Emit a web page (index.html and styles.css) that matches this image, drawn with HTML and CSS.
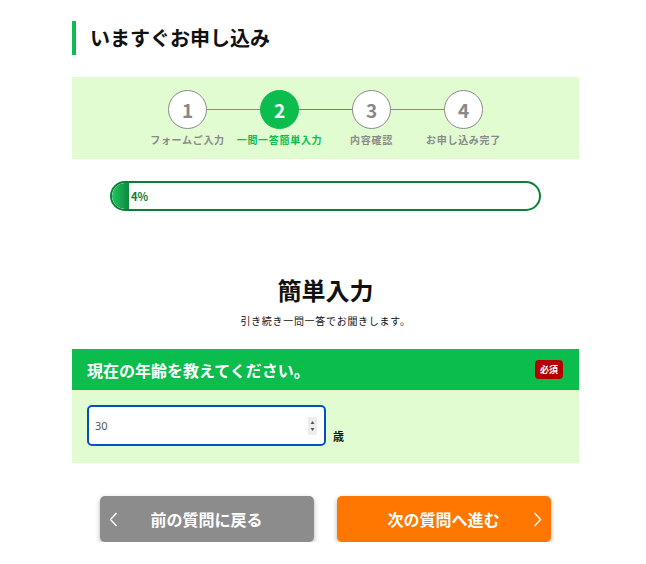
FILE: index.html
```html
<!DOCTYPE html>
<html lang="ja">
<head>
<meta charset="utf-8">
<title>いますぐお申し込み</title>
<link rel="stylesheet" href="styles.css">
</head>
<body>
<div class="page">
  <h1 class="page-title">いますぐお申し込み</h1>

  <div class="steps">
    <div class="step done">
      <div class="circle">1</div>
      <div class="step-label">フォームご入力</div>
    </div>
    <div class="step active">
      <div class="circle">2</div>
      <div class="step-label">一問一答簡単入力</div>
    </div>
    <div class="step">
      <div class="circle">3</div>
      <div class="step-label">内容確認</div>
    </div>
    <div class="step last">
      <div class="circle">4</div>
      <div class="step-label">お申し込み完了</div>
    </div>
  </div>

  <div class="progress">
    <div class="progress-fill" style="width:4%"></div>
    <span class="progress-text">4%</span>
  </div>

  <h2 class="section-title">簡単入力</h2>
  <p class="section-sub">引き続き一問一答でお聞きします。</p>

  <div class="question">
    <div class="question-head">
      <span class="question-text">現在の年齢を教えてください。</span>
      <span class="badge">必須</span>
    </div>
    <div class="question-body">
      <label class="num-field">
        <input class="num-input" type="text" value="30">
        <span class="spinner">
          <svg width="9" height="18" viewBox="0 0 9 18"><polygon points="4.5,4 6.5,7 2.5,7" fill="#555"/><polygon points="2.5,11 6.5,11 4.5,14" fill="#555"/></svg>
        </span>
      </label>
      <span class="unit">歳</span>
    </div>
  </div>

  <div class="buttons">
    <button class="btn btn-back">
      <svg class="chev" width="9" height="15" viewBox="0 0 9 15"><polyline points="7.5,1 1.5,7.5 7.5,14" fill="none" stroke="#fff" stroke-width="1.4"/></svg>
      <span class="btn-text">前の質問に戻る</span>
      <span class="chev-space"></span>
    </button>
    <button class="btn btn-next">
      <span class="chev-space"></span>
      <span class="btn-text">次の質問へ進む</span>
      <svg class="chev" width="9" height="15" viewBox="0 0 9 15"><polyline points="1.5,1 7.5,7.5 1.5,14" fill="none" stroke="#fff" stroke-width="1.4"/></svg>
    </button>
  </div>
</div>
</body>
</html>
```

FILE: styles.css
```css
* { box-sizing: border-box; }

body {
  margin: 0;
  background: #fff;
  font-family: "Noto Sans CJK JP", "Noto Sans", sans-serif;
  color: #111;
}

.page {
  width: 507px;
  margin-left: 72px;
  padding-top: 21px;
}

.page-title {
  margin: 0;
  height: 34px;
  line-height: 34px;
  border-left: 4px solid #0bbd4d;
  padding-left: 14px;
  font-size: 20px;
  font-weight: 700;
  color: #111;
}

.steps {
  margin-top: 22px;
  height: 82px;
  background: #e1fcd1;
  display: flex;
  justify-content: center;
  padding-top: 13px;
}

.step {
  position: relative;
  width: 92px;
  display: flex;
  flex-direction: column;
  align-items: center;
}

.step::after {
  content: "";
  position: absolute;
  left: 50%;
  width: 92px;
  top: 19px;
  height: 1px;
  background: #8a8a8a;
  z-index: 0;
}

.step.active::after { background: #0bbd4d; }
.step.last::after { display: none; }

.circle {
  position: relative;
  z-index: 1;
  width: 39px;
  height: 39px;
  border-radius: 50%;
  background: #fff;
  border: 1px solid #8a8a8a;
  display: flex;
  align-items: center;
  justify-content: center;
  font-size: 19px;
  font-weight: 700;
  color: #888;
  line-height: 1;
}

.step.active .circle {
  background: #0bbd4d;
  border-color: #0bbd4d;
  color: #fff;
}

.step-label {
  margin-top: 3px;
  font-size: 10px;
  font-weight: 700;
  letter-spacing: 0.7px;
  color: #8a8a8a;
  white-space: nowrap;
  line-height: 16px;
}

.step.active .step-label { color: #0bbd4d; }

.progress {
  margin: 22px 38px 0;
  height: 30px;
  border: 2px solid #0a8039;
  border-radius: 15px;
  background: #fff;
  display: flex;
  align-items: center;
  overflow: hidden;
}

.progress-fill {
  height: 100%;
  background: linear-gradient(to right, #22c55f, #0a8a3e);
  border-radius: 13px 0 0 13px;
}

.progress-text {
  margin-left: 2px;
  font-size: 11px;
  font-weight: 700;
  color: #0a7a36;
}

.section-title {
  margin: 61px 0 0;
  text-align: center;
  font-size: 24px;
  line-height: 36px;
  font-weight: 700;
  color: #111;
}

.section-sub {
  margin: 5px 0 0;
  text-align: center;
  font-size: 10px;
  letter-spacing: 0.7px;
  line-height: 16px;
  color: #111;
}

.question { margin-top: 20px; }

.question-head {
  height: 41px;
  background: #0bbd4d;
  display: flex;
  align-items: center;
  justify-content: space-between;
  padding: 0 16px 0 15px;
}

.question-text {
  color: #fff;
  font-size: 16px;
  font-weight: 700;
}

.badge {
  width: 28px;
  height: 19px;
  border-radius: 4px;
  background: #b30000;
  color: #fff;
  font-size: 9px;
  font-weight: 700;
  display: flex;
  align-items: center;
  justify-content: center;
}

.question-body {
  height: 73px;
  background: #e1fcd1;
  padding: 15px 15px 0;
  display: flex;
  align-items: flex-end;
}

.num-field {
  width: 239px;
  height: 41px;
  border: 2px solid #0050c8;
  border-radius: 5px;
  background: #fff;
  display: flex;
  align-items: center;
  padding: 0 7px 0 6px;
  align-self: flex-start;
}

.num-input {
  flex: 1;
  min-width: 0;
  border: 0;
  outline: none;
  background: transparent;
  font-family: "Noto Sans", "Noto Sans CJK JP", sans-serif;
  font-size: 11px;
  color: #555;
  padding: 0;
}

.spinner {
  width: 9px;
  height: 18px;
  background: #ededed;
  display: flex;
}

.unit {
  margin: 0 0 19px 7px;
  font-size: 11px;
  font-weight: 700;
  line-height: 16px;
  color: #111;
}

.buttons {
  margin-top: 33px;
  display: flex;
  justify-content: center;
  gap: 23px;
  padding-right: 1px;
}

.btn {
  width: 214px;
  height: 46px;
  border: 0;
  border-radius: 5px;
  color: #fff;
  font-family: "Noto Sans CJK JP", sans-serif;
  font-size: 16px;
  font-weight: 700;
  display: grid;
  grid-template-columns: 26px 1fr 26px;
  align-items: center;
  padding: 0;
  box-shadow: 0 2px 5px rgba(0,0,0,0.3);
}

.btn-back { background: #8c8c8c; }
.btn-next { background: #ff7600; }

.btn-back .chev { margin-left: 9px; }
.btn-next .chev { margin-left: 8px; }

.btn-text { text-align: center; }
```
